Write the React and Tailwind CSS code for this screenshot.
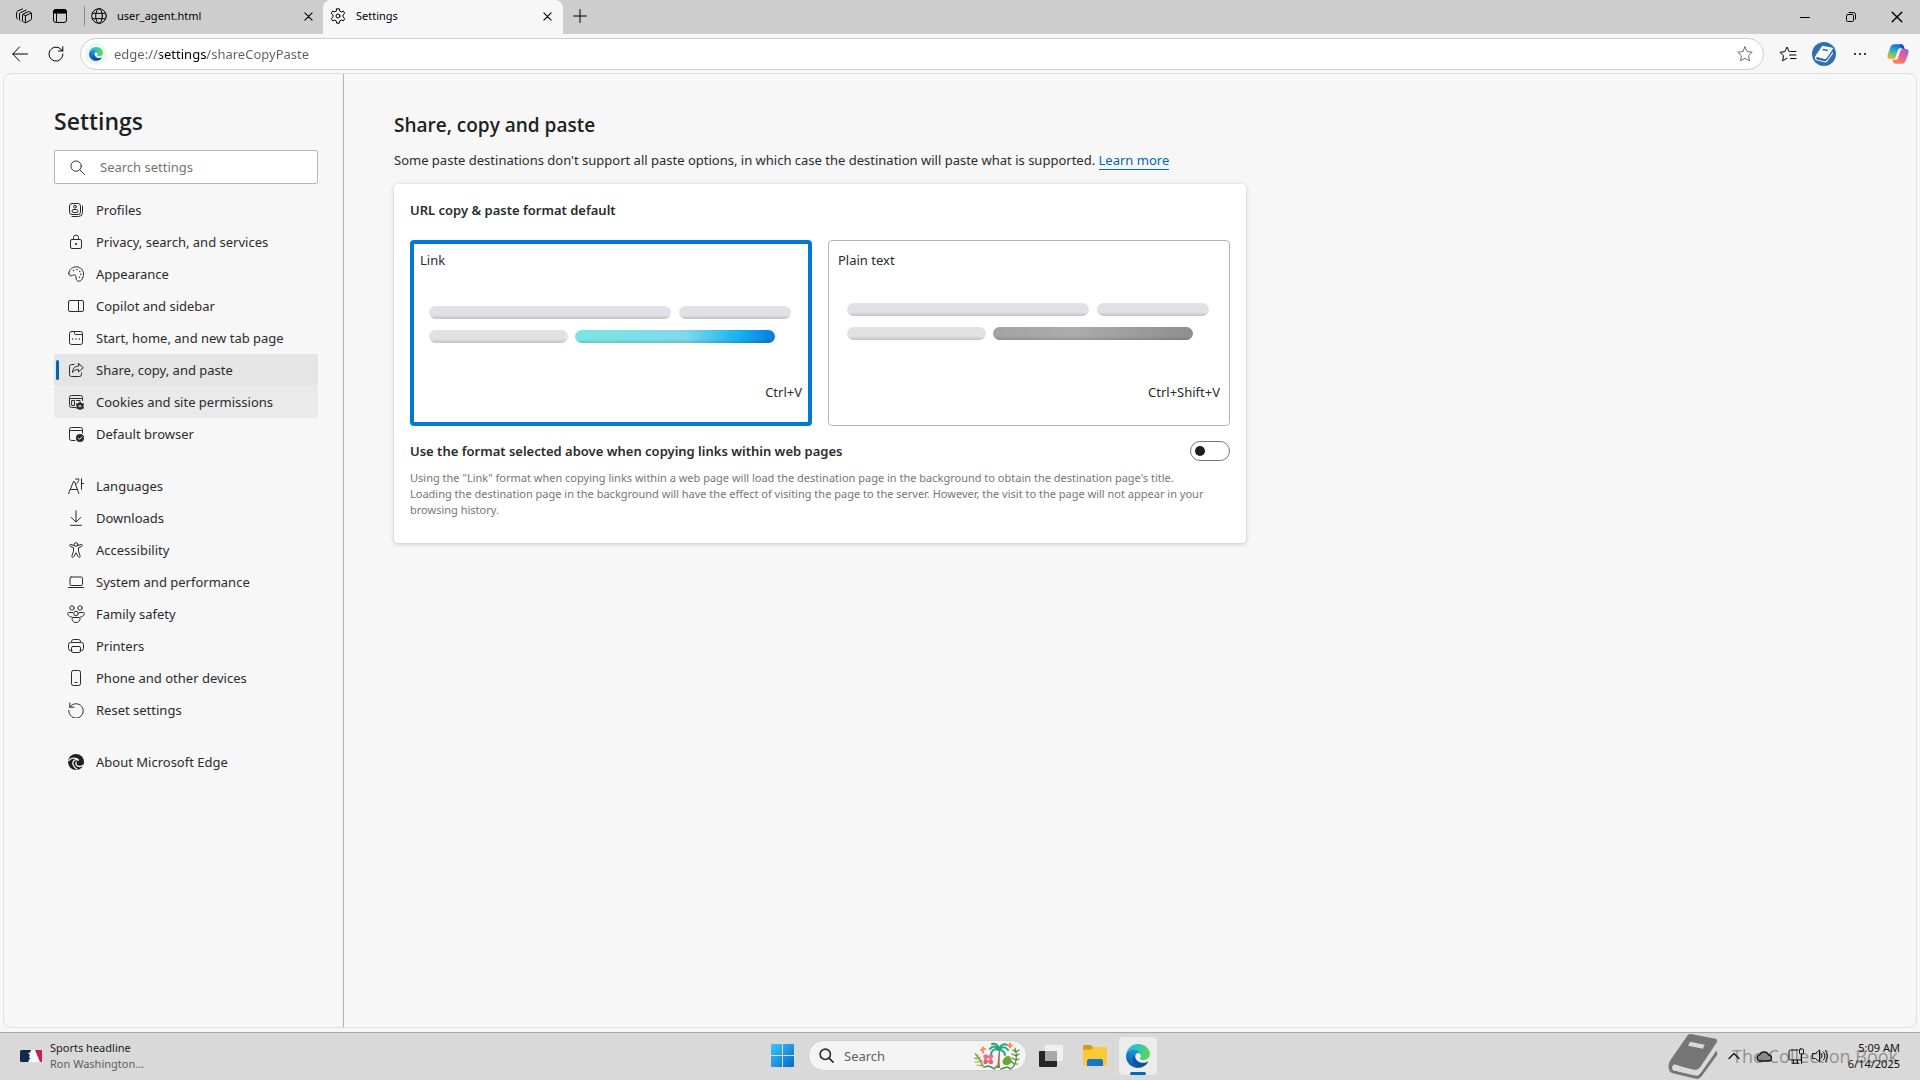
import React, { useId, useState } from "react";
import clsx from "clsx";

const Icon = ({ children, className = "size-4", box = 16, width = 1 }) => (
  <svg
    viewBox={`0 0 ${box} ${box}`}
    className={clsx("shrink-0", className)}
    fill="none"
    stroke="currentColor"
    strokeWidth={width}
    strokeLinecap="round"
    strokeLinejoin="round"
    aria-hidden="true"
  >
    {children}
  </svg>
);

const EDGE_BASE = "M231 190.5c-3.4 1.8-6.9 3.4-10.5 4.7a101.5 101.5 0 0 1-35.6 6.4c-47 0-87.8-32.3-87.8-73.7.1-11.4 6.4-21.8 16.4-27.2-42.5 1.8-53.4 46-53.4 72 0 73.3 67.6 80.8 82.1 80.8 7.8 0 19.6-2.3 26.7-4.6l1.3-.4a128.3 128.3 0 0 0 66.6-52.8 4 4 0 0 0-5.8-5.2z";
const EDGE_LEFT = "M105.7 241.4a79.2 79.2 0 0 1-22.7-21.3 80.7 80.7 0 0 1 29.5-119.4c3.2-1.5 8.5-4.1 15.6-4a32.4 32.4 0 0 1 25.7 13 31.9 31.9 0 0 1 6.3 18.7c0-.2 24.5-79.6-80-79.6-43.9 0-80 41.7-80 78.2a130.2 130.2 0 0 0 12.1 56 128 128 0 0 0 156.4 67 75.5 75.5 0 0 1-62.8-8z";
const EDGE_TOP = "M152.3 148.9c-.9 1-3.4 2.5-3.4 5.6 0 2.6 1.7 5.2 4.8 7.3 14.3 10 41.4 8.6 41.5 8.6 10.7 0 21.1-2.9 30.3-8.3a61.4 61.4 0 0 0 30.4-52.9c.3-22.4-8-37.3-11.3-43.9C223.5 23.9 177.7 0 128 0A128 128 0 0 0 0 126.2c.5-36.5 36.8-66 80-66 3.5 0 23.5.3 42 10.1 16.3 8.6 24.9 18.9 30.8 29.2 6.2 10.7 7.3 24.1 7.3 29.5s-2.7 13.3-7.8 19.9z";

const EdgeLogo = ({ className }) => {
  const id = useId();
  return (
    <svg viewBox="0 0 256 256" className={clsx("shrink-0", className)} aria-hidden="true">
      <defs>
        <linearGradient id={`${id}a`} x1="0" y1="1" x2="1" y2="1">
          <stop offset="0" stopColor="#0c59a4" />
          <stop offset="1" stopColor="#114a8b" />
        </linearGradient>
        <linearGradient id={`${id}b`} x1=".8" y1="0" x2=".3" y2="1">
          <stop offset="0" stopColor="#1b9de2" />
          <stop offset=".5" stopColor="#1580d2" />
          <stop offset="1" stopColor="#0b55a5" />
        </linearGradient>
        <linearGradient id={`${id}c`} x1="0" y1=".4" x2="1" y2=".6">
          <stop offset="0" stopColor="#30b8e4" />
          <stop offset=".5" stopColor="#36c7b0" />
          <stop offset="1" stopColor="#62d94b" />
        </linearGradient>
      </defs>
      <path d={EDGE_BASE} fill={`url(#${id}a)`} />
      <path d={EDGE_LEFT} fill={`url(#${id}b)`} />
      <path d={EDGE_TOP} fill={`url(#${id}c)`} />
    </svg>
  );
};

const icons = {
  profiles: (
    <Icon>
      <rect x="1.5" y="1.5" width="11" height="11" rx="2.5" />
      <circle cx="7" cy="4.7" r="1.4" />
      <rect x="4" y="7.5" width="6" height="3" rx="1.5" />
      <path d="M14.5 4v6.5a4 4 0 0 1-4 4H4" />
    </Icon>
  ),
  privacy: (
    <Icon>
      <rect x="2.5" y="5.5" width="11" height="9" rx="1.5" />
      <path d="M5.5 5.5V3.5a2.5 2.5 0 0 1 5 0v2" />
      <circle cx="8" cy="10" r=".6" fill="currentColor" />
    </Icon>
  ),
  appearance: (
    <Icon>
      <path d="M.8 7.2C1.2 3.2 4.6 .7 8.5 .8c4 .2 7 3.2 7 7.2 0 4-2 7.2-4.6 7.2-2 0-2.8-1.4-2.8-3.2 0-1.7-.2-3.2-1.8-3.2-1.5 0-2 1.2-3.4 1C1.2 9.6.7 8.5.8 7.2z" />
      <path d="M5.5 4.5h.01M9 3.6h.01M11.8 5.4h.01M12.8 8.3h.01M11.5 11.3h.01" strokeWidth="1.5" />
    </Icon>
  ),
  sidebar: (
    <Icon>
      <rect x=".5" y="2.5" width="15" height="11" rx="1.5" />
      <path d="M10.5 2.5v11" />
    </Icon>
  ),
  start: (
    <Icon>
      <rect x="1.5" y="1.5" width="13" height="13" rx="2" />
      <path d="M6.5 1.5v2a1 1 0 0 0 1 1h7" />
      <path d="M4.6 9h.01M8 9h.01M11.4 9h.01" strokeWidth="1.5" />
    </Icon>
  ),
  share: (
    <Icon>
      <path d="M6 2.5H3.5a2 2 0 0 0-2 2v8a2 2 0 0 0 2 2h8a2 2 0 0 0 2-2V11" />
      <path d="M10.5 1.5l4.8 4.2-4.8 4.2V7.5C7.5 7.5 5.7 8.5 4.5 10.5c.2-4 2.2-6.3 6-6.5z" />
    </Icon>
  ),
  cookies: (
    <Icon>
      <path d="M7.5 13.5h-4a2 2 0 0 1-2-2v-8a2 2 0 0 1 2-2h9a2 2 0 0 1 2 2v3M1.5 4.5h13" />
      <path d="M4 6.5h2.5v5H4zM8.5 6.5h3.5" />
      <circle cx="12" cy="12" r="2.6" strokeWidth="2" />
      <path d="M12 8v8M8.5 10l7 4M15.5 10l-7 4" strokeWidth="1.3" />
      <circle cx="12" cy="12" r=".9" fill="#eaeaea" stroke="none" />
    </Icon>
  ),
  browser: (
    <Icon>
      <path d="M7 14.5H3.5a2 2 0 0 1-2-2v-9a2 2 0 0 1 2-2h9a2 2 0 0 1 2 2V7M1.5 4.5h13" />
      <circle cx="12" cy="12" r="4" fill="currentColor" stroke="none" />
      <path d="M10.2 12.2l1.3 1.2 2.4-2.4" stroke="#f7f7f7" />
    </Icon>
  ),
  languages: (
    <Icon>
      <path d="M.6 15.5L5.5 3.5h1l4.3 12M2.5 11.5h6.7M7.5 1h3.3c0 2-.8 3.6-2.3 4.8M13.5.7v10.6M13.5 5.5h2" />
    </Icon>
  ),
  downloads: (
    <Icon>
      <path d="M8 .8v11M3.3 7.5L8 12l4.7-4.5M2.5 15.3h11" />
    </Icon>
  ),
  accessibility: (
    <Icon>
      <circle cx="8" cy="2.5" r="1.8" />
      <path d="M6 3.5l-3-1c-1.4-.4-2 1.4-.7 1.9l3.2 1.3v3.5l-1.6 4.6c-.5 1.5 1.3 2.1 1.9.8L8 10.8l2.2 3.8c.6 1.3 2.4.7 1.9-.8l-1.6-4.6V5.7l3.2-1.3c1.3-.5.7-2.3-.7-1.9l-3 1" />
    </Icon>
  ),
  system: (
    <Icon>
      <rect x="2" y="3" width="12.5" height="8.5" rx="1.2" />
      <path d="M.5 13.5h15" />
    </Icon>
  ),
  family: (
    <Icon className="-mx-px size-[18px]" box={18}>
      <circle cx="5" cy="3" r="2.2" />
      <circle cx="13" cy="3" r="2.2" />
      <circle cx="9" cy="8.5" r="2.3" />
      <path d="M5.5 7.5H1.6c-1.8 0-1 4.5 3 4.5M12.5 7.5h3.9c1.8 0 1 4.5-3 4.5M5.5 12.5h7c1 0 1 5-3.5 5s-4.5-5-3.5-5z" />
    </Icon>
  ),
  printers: (
    <Icon>
      <path d="M3.5 4.5v-1a2 2 0 0 1 2-2h5a2 2 0 0 1 2 2v1M4 12.5H2.5a2 2 0 0 1-2-2v-4a2 2 0 0 1 2-2h11a2 2 0 0 1 2 2v4a2 2 0 0 1-2 2H12" />
      <rect x="3.5" y="8.5" width="9" height="6" rx="1.3" />
    </Icon>
  ),
  phone: (
    <Icon>
      <rect x="3.5" y=".5" width="9" height="15" rx="1.8" />
      <path d="M7 12.5h2" />
    </Icon>
  ),
  reset: (
    <Icon>
      <path d="M1.8 1v4.2H6M1.8 5.2A7.2 7.2 0 1 1 .8 8.5" />
    </Icon>
  ),
  about: (
    <Icon>
      <circle cx="8" cy="8" r="8" fill="#1f1f1f" stroke="none" />
      <path d="M.8 6.5C3 3.8 8 3.2 10.5 6M10.2 6.2C6.5 4.5 3.5 8 5.5 11.5c.8 1.6 2 2.8 3.5 3.8M8.2 8.2c-1 2 .5 4.3 3.3 4.3 1.5 0 2.8-.5 3.7-1.2" stroke="#f7f7f7" strokeWidth="1.3" />
    </Icon>
  ),
};

const navGroups = [
  [
    { icon: "profiles", label: "Profiles" },
    { icon: "privacy", label: "Privacy, search, and services" },
    { icon: "appearance", label: "Appearance" },
    { icon: "sidebar", label: "Copilot and sidebar" },
    { icon: "start", label: "Start, home, and new tab page" },
    { icon: "share", label: "Share, copy, and paste", active: true },
    { icon: "cookies", label: "Cookies and site permissions", hovered: true },
    { icon: "browser", label: "Default browser" },
  ],
  [
    { icon: "languages", label: "Languages" },
    { icon: "downloads", label: "Downloads" },
    { icon: "accessibility", label: "Accessibility" },
    { icon: "system", label: "System and performance" },
    { icon: "family", label: "Family safety" },
    { icon: "printers", label: "Printers" },
    { icon: "phone", label: "Phone and other devices" },
    { icon: "reset", label: "Reset settings" },
  ],
  [{ icon: "about", label: "About Microsoft Edge" }],
];

const CloseGlyph = ({ className = "size-[9px]" }) => (
  <Icon box={10} className={className} width={1.2}>
    <path d="M1 1l8 8M9 1L1 9" />
  </Icon>
);

const TitleBar = () => (
  <header className="flex h-[34px] items-stretch bg-[#cdcdcd] pb-0.5 text-[11px] text-black">
    <div className="flex items-center pl-4">
      <button type="button" aria-label="Workspaces" className="w-9">
        <Icon>
          <path d="M6.5 7.2a1.5 1.5 0 0 1 .9-1.3L12 3.8c.5-.2.9-.2 1.4 0l1.3.6c.5.3.8.7.8 1.300v5c0 .6-.3 1.100-.9 1.400L10 14.600c-.5.2-.9.2-1.400 0l-1.300-.7a1.500 1.500 0 0 1-.8-1.300zM7 6.500l2.400 1.300 5.600-2.700M9.400 7.800v6.800" />
          <path d="M4.200 12.800a1.500 1.500 0 0 1-.7-1.300V6c0-.6.3-1.100.9-1.400L10 2.200M1.500 11a1.500 1.500 0 0 1-.9-1.300V4.500c0-.6.3-1.100.9-1.400L6.500.9" />
        </Icon>
      </button>
      <button type="button" aria-label="Tab actions" className="w-8">
        <Icon>
          <rect x="1.5" y="1.5" width="13" height="13" rx="2.5" />
          <path d="M1.5 3.5a2 2 0 0 1 2-2h9a2 2 0 0 1 2 2v1.6h-13z" fill="currentColor" />
          <path d="M4.5 5v9.5" />
        </Icon>
      </button>
      <span className="h-5 w-px bg-[#8a8a8a]" />
    </div>
    <div className="flex w-[238px] items-center pl-1.5 pr-1.5">
      <Icon>
        <circle cx="8" cy="8" r="7.3" />
        <ellipse cx="8" cy="8" rx="3.3" ry="7.3" />
        <path d="M1.4 5.3h13.2M1.4 10.7h13.2" />
      </Icon>
      <button type="button" className="flex-1 pl-2.5 text-left">user_agent.html</button>
      <button type="button" aria-label="Close user_agent.html" className="px-1">
        <CloseGlyph />
      </button>
    </div>
    <div className="-mb-0.5 flex w-[240px] items-center rounded-t-lg bg-[#f7f7f7] pb-0.5 pl-[7px] pr-[7px]">
      <Icon>
        <circle cx="8" cy="8" r="2" />
        <path d="M6.7.8h2.6l.5 2.3 1.4.8 2.2-.8 1.3 2.3-1.7 1.6v1.9l1.7 1.7-1.3 2.2-2.2-.7-1.4.8-.5 2.3H6.7l-.5-2.3-1.4-.8-2.2.7-1.3-2.2L3 8.900V7L1.300 5.400l1.300-2.300 2.200.8 1.400-.8z" />
      </Icon>
      <button type="button" className="flex-1 pl-2.5 text-left">Settings</button>
      <button type="button" aria-label="Close Settings" className="px-1">
        <CloseGlyph />
      </button>
    </div>
    <button type="button" aria-label="New tab" className="px-2.5">
      <Icon className="size-[14px]" box={14}>
        <path d="M7 .5v13M.5 7h13" />
      </Icon>
    </button>
    <div className="ml-auto flex pt-0.5">
      <button type="button" aria-label="Minimize" className="flex w-[46px] items-center justify-center">
        <Icon className="size-[10px]" box={10}><path d="M.5 5.5h9" /></Icon>
      </button>
      <button type="button" aria-label="Restore" className="flex w-[46px] items-center justify-center">
        <Icon className="size-[10px]" box={10}>
          <rect x=".5" y="2.5" width="7" height="7" rx="1.2" />
          <path d="M3 .6h4.5a2 2 0 0 1 2 2V7" />
        </Icon>
      </button>
      <button type="button" aria-label="Close window" className="flex w-[46px] items-center justify-center">
        <CloseGlyph className="size-3" />
      </button>
    </div>
  </header>
);

const CopilotLogo = () => (
  <svg viewBox="0 0 24 24" className="size-6" aria-hidden="true">
    <defs>
      <linearGradient id="cpL" x1=".6" y1="0" x2=".3" y2="1">
        <stop offset="0" stopColor="#1a66e0" />
        <stop offset=".45" stopColor="#22b0d8" />
        <stop offset=".7" stopColor="#7cc46a" />
        <stop offset="1" stopColor="#f4b61e" />
      </linearGradient>
      <linearGradient id="cpR" x1=".8" y1="0" x2=".3" y2="1">
        <stop offset="0" stopColor="#9b62ea" />
        <stop offset=".45" stopColor="#e75a9c" />
        <stop offset="1" stopColor="#ff8a4c" />
      </linearGradient>
    </defs>
    <path d="M14 2.2H8.2C6.2 2.2 5 3.6 4.3 5.6L1.6 13c-.8 2.6.3 4 2.7 4H7c1.5 0 2.2-.8 2.7-2.2l2.2-6.6c.5-1.4 1.2-2 2.6-2h3.2l-.7-2C16.5 2.8 15.6 2.2 14 2.2z" fill="url(#cpL)" />
    <path d="M10 21.8h5.8c2 0 3.2-1.4 3.9-3.4l2.7-7.4c.8-2.6-.3-4-2.7-4H17c-1.5 0-2.2.8-2.7 2.2l-2.2 6.6c-.5 1.4-1.2 2-2.6 2H6.3l.7 2c.5 1.4 1.4 2 3 2z" fill="url(#cpR)" />
    <path d="M14 2.2h1.6c1.2 0 1.9 1 2.3 2.2l.9 2.6h-1.3c-1.5 0-2.1-.5-2.5-1.9z" fill="#2448b8" />
  </svg>
);

const BookGlyph = ({ className, color, page }) => (
  <svg viewBox="0 0 50 47" className={className} aria-hidden="true">
    <path d="M23 1l25 5c2 .5 2 2 1 4L33 34c-2 3-4 4-7 3.5L6 33c-2 0-3 3-1.5 5L27 43.5c3 .5 4-.5 6-3L49 18l1 4-16 22c-2 2.5-4 3.5-7 2.5L4 41c-4-1.5-5-6-3-12L19 3c1-1.5 2-2.4 4-2z" fill={color} />
    <path d="M6 32c-2 1-3 4-1 6l22 5c3 .5 4-.5 6-3l14-19-13 14c-2 3-5 4-8 3.3z" fill={page} />
    <path d="M22 9l15 3-2 4-15-3z" fill={page} />
  </svg>
);

const Toolbar = () => (
  <div className="flex h-[39px] items-center bg-[#f7f7f7] pl-3 pr-2.5 text-black">
    <button type="button" aria-label="Back" className="w-9">
      <Icon><path d="M15.5 8H.8M7.5 1L.8 8l6.7 7" /></Icon>
    </button>
    <button type="button" aria-label="Refresh" className="w-8">
      <Icon>
        <path d="M15 8A7 7 0 1 1 12.8 3l1.9 2M14.8.7V5H10.5" />
      </Icon>
    </button>
    <div className="flex h-8 flex-1 items-center rounded-full border border-[#cfcfcf] bg-white pl-1 pr-2.5">
      <span className="flex size-[22px] items-center justify-center rounded-full bg-[#eef5f6]">
        <EdgeLogo className="size-[14px]" />
      </span>
      <input
        type="text"
        aria-label="Address"
        defaultValue="edge://settings/shareCopyPaste"
        className="ml-[7px] flex-1 bg-[linear-gradient(90deg,#5f5f5f_46px,#000_46px,#000_93px,#5f5f5f_93px)] bg-clip-text pt-0.5 text-[13px] text-transparent outline-none"
      />
      <button type="button" aria-label="Add to favorites" className="text-[#6b6b6b]">
        <Icon>
          <path d="M8 .9l2.2 4.6 5 .7-3.6 3.5.9 5L8 12.3l-4.5 2.4.9-5L.8 6.2l5-.7z" />
        </Icon>
      </button>
    </div>
    <div className="ml-[15px] flex items-center">
      <button type="button" aria-label="Favorites" className="mr-[15px]">
        <Icon className="size-[18px]" box={18}>
          <path d="M8 13.3L3.6 15.8l.9-5L1 7.3l4.9-.7L8 2l2.2 4.6M11.5 6.5h5.5M10.5 10h6.5M11.5 13.5h5.5" />
        </Icon>
      </button>
      <button type="button" aria-label="Profile" className="mr-4 flex size-6 items-center justify-center rounded-full bg-[#2f6fb0]">
        <BookGlyph className="size-[18px]" color="#fff" page="#2f6fb0" />
      </button>
      <button type="button" aria-label="Settings and more" className="mr-[18px]">
        <Icon>
          <path d="M3 8h.01M8 8h.01M13 8h.01" strokeWidth="2" />
        </Icon>
      </button>
      <button type="button" aria-label="Copilot"><CopilotLogo /></button>
    </div>
  </div>
);

const Sidebar = () => (
  <aside className="w-[340px] shrink-0 border-r border-[#b3b3b3] pl-[50px] pr-[25px]">
    <h1 className="pt-[31px] font-['Open_Sans',sans-serif] text-[23px] font-semibold leading-8 text-[#1f1f1f]">Settings</h1>
    <label className="mt-[13px] flex h-[34px] items-center rounded-xs border border-[#b5b5b5] bg-white pl-[15px]">
      <Icon className="size-[15px] text-[#2b2b2b]">
        <circle cx="6.5" cy="6.5" r="5.5" />
        <path d="M10.5 10.5l5 5" />
      </Icon>
      <input
        type="search"
        aria-label="Search settings"
        placeholder="Search settings"
        className="ml-[15px] min-w-0 flex-1 bg-transparent pt-0.5 text-[13px] outline-none placeholder:text-[#757575]"
      />
    </label>
    <nav className="mt-2.5 flex flex-col gap-5">
      {navGroups.map((group, i) => (
        <ul key={i}>
          {group.map((item) => (
            <li key={item.label}>
              <a
                href="#"
                className={clsx(
                  "flex h-8 items-center rounded-xs pl-0.5 text-[13px] text-[#2b2b2b]",
                  item.active && "bg-[#e5e5e5]",
                  item.hovered && "bg-[#eaeaea]"
                )}
              >
                <span className={clsx("mr-[9px] h-5 w-[3px] rounded-full", item.active && "bg-[#0067b8]")} />
                {icons[item.icon]}
                <span className="pl-3 pt-0.5">{item.label}</span>
              </a>
            </li>
          ))}
        </ul>
      ))}
    </nav>
  </aside>
);

// Skeleton text lines, the last bar stands for the pasted link
const PastePreview = ({ linked }) => (
  <svg viewBox="0 0 366 40" className="w-full" aria-hidden="true">
    <defs>
      <linearGradient id="barLink">
        <stop offset="0" stopColor="#7ce6e2" />
        <stop offset=".55" stopColor="#7fd9ea" />
        <stop offset=".82" stopColor="#14b4ee" />
        <stop offset="1" stopColor="#0a78e0" />
      </linearGradient>
      <linearGradient id="barPlain">
        <stop offset="0" stopColor="#a3a3a5" />
        <stop offset=".4" stopColor="#acacae" />
        <stop offset="1" stopColor="#8e8e8e" />
      </linearGradient>
      <linearGradient id="barShade" x1="0" y1="0" x2="0" y2="1">
        <stop offset=".7" stopColor="#000" stopOpacity="0" />
        <stop offset="1" stopColor="#000" stopOpacity=".14" />
      </linearGradient>
    </defs>
    <g fill="#e1e1e5">
      <rect x="1" y="1" width="242" height="13" rx="6.5" />
      <rect x="251" y="1" width="112" height="13" rx="6.5" />
      <rect x="1" y="25" width="139" height="13" rx="6.5" />
    </g>
    <rect x="147" y="25" width="200" height="13" rx="6.5" fill={linked ? "url(#barLink)" : "url(#barPlain)"} />
    <g fill="url(#barShade)">
      <rect x="1" y="1" width="242" height="13" rx="6.5" />
      <rect x="251" y="1" width="112" height="13" rx="6.5" />
      <rect x="1" y="25" width="139" height="13" rx="6.5" />
      <rect x="147" y="25" width="200" height="13" rx="6.5" />
    </g>
  </svg>
);

const FormatOption = ({ label, shortcut, value, format, onChange }) => {
  const checked = format === value;
  return (
    <label
      className={clsx(
        "flex h-[186px] flex-1 flex-col rounded-sm bg-white text-[13px] leading-5 text-[#2b2b2b]",
        checked ? "border-4 border-[#0078d4] p-1.5" : "border border-[#b5b5b5] p-[9px]"
      )}
    >
      <input
        type="radio"
        name="format"
        value={value}
        checked={checked}
        onChange={() => onChange(value)}
        className="sr-only"
      />
      <span>{label}</span>
      <span className={clsx("px-2", checked ? "pt-[35px]" : "pt-8")}>
        <PastePreview linked={value === "link"} />
      </span>
      <span className="mb-3.5 mt-auto text-right">{shortcut}</span>
    </label>
  );
};

const SharePage = () => {
  const [format, setFormat] = useState("link");

  return (
    <main className="min-w-0 flex-1 px-[50px] pt-[37px] text-[#2b2b2b]">
      <h2 className="font-['Open_Sans',sans-serif] text-[19px] font-semibold leading-7 text-[#1f1f1f]">Share, copy and paste</h2>
      <p className="mt-[11px] text-[13px] leading-5">
        Some paste destinations don't support all paste options, in which case the destination will paste what is supported.{" "}
        <a href="#" className="inline-block border-b border-[#0067b8] leading-[17px] text-[#0067b8]">Learn more</a>
      </p>
      <section className="mt-3.5 max-w-[852px] rounded-sm bg-white px-4 pb-[25px] pt-4 shadow-[0_1px_4px_rgba(0,0,0,0.22)]">
        <h3 className="text-[13px] font-semibold leading-5">URL copy &amp; paste format default</h3>
        <div className="mt-5 flex gap-4">
          <FormatOption label="Link" shortcut="Ctrl+V" value="link" format={format} onChange={setFormat} />
          <FormatOption label="Plain text" shortcut="Ctrl+Shift+V" value="plain" format={format} onChange={setFormat} />
        </div>
        <div className="mt-[15px] flex items-center justify-between">
          <label htmlFor="in-page" className="text-[13px] font-semibold leading-5">
            Use the format selected above when copying links within web pages
          </label>
          <input
            id="in-page"
            type="checkbox"
            role="switch"
            className="flex h-5 w-10 appearance-none items-center rounded-full border border-[#767676] bg-white px-1 before:size-2.5 before:rounded-full before:bg-[#1f1f1f] checked:justify-end"
          />
        </div>
        <p className="mt-[9px] text-[11px] leading-4 text-[#767676]">
          Using the "Link" format when copying links within a web page will load the destination page in the background to obtain the destination page's title.
          <br />
          Loading the destination page in the background will have the effect of visiting the page to the server. However, the visit to the page will not appear in your browsing history.
        </p>
      </section>
    </main>
  );
};

const SearchArt = () => (
  <svg viewBox="0 0 46 28" className="h-7 w-[46px]" fill="none" strokeLinecap="round" aria-hidden="true">
    <path d="M9 24C7 19 4 15 1.5 12" stroke="#7a9a2c" strokeWidth="1.5" />
    <path d="M3 17l1-4M5 20l1-5M7 23l1-5M3 17l-3-1M5 20l-4 0M8 24l-5-1" stroke="#8fae3a" strokeWidth="1.2" />
    <path d="M25 9c-1 6-1 11-2 17h3c-1-6 0-11 0-17z" fill="#a8653a" />
    <path d="M25 8C22 3 18 4 16 7M25 8c-5-2-8 1-8 5M25 8c0-5-4-7-7-6M25 8c1-5 5-7 8-5M25 8c4-4 7-3 9 0M25 8c4 0 6 3 6 5" stroke="#23a67a" strokeWidth="2" />
    <circle cx="14" cy="17" r="3.6" fill="#e8578c" />
    <circle cx="11.5" cy="14.5" r="2.2" fill="#f06a9a" />
    <circle cx="17" cy="14.5" r="2.2" fill="#f06a9a" />
    <circle cx="11.5" cy="20" r="2.2" fill="#e8578c" />
    <circle cx="17" cy="20" r="2.2" fill="#e8578c" />
    <circle cx="14.2" cy="17.2" r="1.7" fill="#ffd66b" />
    <path d="M7 8l4-1M9 5.5v5M34 3.5h4M36 1.5v4" stroke="#ff8a4c" strokeWidth="2" />
    <path d="M29 18c2-4 6-5 7-3 3 3 1 8-3 8s-5-2-4-5z" fill="#6aa62e" />
    <path d="M38 26c5-5 5-13 3-20M40 22l4 0M42 18l3-1M42 14l3-2M42 10l3-2M40 22l-3-3M42 18l-4-2M42 14l-4-2M42 10l-3-2" stroke="#4f8f3a" strokeWidth="1.2" />
    <path d="M10 25l5-1 4 2M20 27l3-3M27 27l6-2 4 2" stroke="#3d9a4a" strokeWidth="1.6" />
  </svg>
);

const Taskbar = () => (
  <footer className="relative grid h-12 grid-cols-[1fr_auto_1fr] items-center border-t border-[#a5a5a5] bg-[#d9d9d9] pb-0.5">
    <button type="button" className="flex items-center gap-2 pl-5 text-left text-[11px] leading-4">
      <svg viewBox="0 0 22 12" className="h-3 w-[22px]" aria-hidden="true">
        <rect width="22" height="12" rx="1.5" fill="#14284b" />
        <path d="M14 0h6.5A1.5 1.5 0 0 1 22 1.5v9a1.5 1.5 0 0 1-1.5 1.5H17z" fill="#c8204a" />
        <path d="M13.500 0h1.500l5 12H8.500c0-1.500.5-2.500 2-3.200C9 8 8.800 6 10 5L8 3l1-.5 2.800 2A2.200 2.200 0 0 1 13.500 0z" fill="#fff" />
      </svg>
      <span>
        <span className="block text-[#1a1a1a]">Sports headline</span>
        <span className="block text-[#5c5c5c]">Ron Washington...</span>
      </span>
    </button>
    <div className="flex items-center pl-2">
      <button type="button" aria-label="Start">
        <svg viewBox="0 0 23 23" className="size-[23px]" aria-hidden="true">
          <defs>
            <linearGradient id="win" x1="0" y1="0" x2="23" y2="23" gradientUnits="userSpaceOnUse">
              <stop offset="0" stopColor="#3ec6f8" />
              <stop offset="1" stopColor="#0369c9" />
            </linearGradient>
          </defs>
          <path d="M1 0h10v11H0V1a1 1 0 0 1 1-1zM12 0h10a1 1 0 0 1 1 1v10H12zM0 12h11v11H1a1 1 0 0 1-1-1zM12 12h11v10a1 1 0 0 1-1 1H12z" fill="url(#win)" />
        </svg>
      </button>
      <label className="ml-3.5 flex h-[31px] w-[219px] items-center rounded-full border border-[#cfcfcf] bg-[#f4f4f4] pl-2.5 pr-1.5">
        <Icon className="size-[15px] text-[#2b2b2b]" width={1.7}>
          <circle cx="6.7" cy="6.7" r="5.5" />
          <path d="M11 11l4 4" />
        </Icon>
        <input
          type="search"
          aria-label="Search"
          placeholder="Search"
          className="ml-2.5 min-w-0 flex-1 bg-transparent pt-0.5 text-[13px] outline-none placeholder:text-[#5f5f5f]"
        />
        <SearchArt />
      </label>
      <button type="button" aria-label="Task view" className="ml-3">
        <svg viewBox="0 0 24 24" className="size-6" aria-hidden="true">
          <rect x="6" y="1" width="18" height="16" rx="1" fill="#f1f1f1" />
          <rect x="0" y="7" width="18" height="16" rx="1" fill="#262626" />
          <rect x="6" y="7" width="12" height="10" fill="#a9a9a9" />
        </svg>
      </button>
      <button type="button" aria-label="File Explorer" className="ml-5">
        <svg viewBox="0 0 24 24" className="size-6" aria-hidden="true">
          <path d="M0 3a2 2 0 0 1 2-2h6l2.5 3H22a2 2 0 0 1 2 2v3H0z" fill="#d39a12" />
          <path d="M0 7.5C0 6 1 5.5 2 5.5h6L11 3h11a2 2 0 0 1 2 2v15a2 2 0 0 1-2 2H2a2 2 0 0 1-2-2z" fill="#fbc836" />
          <path d="M4 22v-5a2 2 0 0 1 2-2h12a2 2 0 0 1 2 2v5z" fill="#1677c9" />
        </svg>
      </button>
      <button type="button" aria-label="Microsoft Edge" className="ml-3 flex h-[38px] w-[38px] flex-col items-center rounded-sm bg-[#ececec] pt-[7px]">
        <EdgeLogo className="size-6" />
        <span className="mt-1 h-[3px] w-4 rounded-full bg-[#0067c0]" />
      </button>
    </div>
    {/* Channel watermark, lies under the tray icons */}
    <div className="pointer-events-none absolute right-[22px] top-0 flex items-center text-[#929292]">
      <BookGlyph className="mr-3.5 h-[46px] w-[50px]" color="#757575" page="#d9d9d9" />
      <span className="font-['Open_Sans',sans-serif] text-[18px] leading-[44px]">The Collection Book</span>
    </div>
    <div className="relative flex items-center justify-end pr-5 text-[#111]">
      <button type="button" aria-label="Show hidden icons" className="mr-4">
        <Icon className="size-3" box={12} width={1.3}><path d="M1 8.5l5-5 5 5" /></Icon>
      </button>
      <button type="button" aria-label="OneDrive" className="mr-4">
        <Icon className="size-4" width={1.3}>
          <path d="M4 13a3.2 3.2 0 0 1-.2-6.3A4.7 4.7 0 0 1 12.6 7 3 3 0 0 1 12.5 13z" fill="#8a8a8a" />
        </Icon>
      </button>
      <button type="button" aria-label="Network" className="mr-2">
        <Icon className="size-4">
          <path d="M10 2H2.5A1.5 1.5 0 0 0 1 3.5v7A1.5 1.5 0 0 0 2.5 12h11M5.5 12v3M9.5 12v3M4 15.3h7" />
          <rect x="11.5" y="1" width="4" height="5" rx=".8" />
          <path d="M13.5 6v9.5" />
        </Icon>
      </button>
      <button type="button" aria-label="Volume" className="mr-2">
        <Icon className="size-4">
          <path d="M1 5.5h2.5L7.5 2v12l-4-3.5H1zM9.5 6a3 3 0 0 1 0 4M11.5 4a6 6 0 0 1 0 8M13.5 2.5a8.5 8.5 0 0 1 0 11" />
        </Icon>
      </button>
      <button type="button" className="w-16 text-right text-[11px] leading-4">
        <span className="block">5:09 AM</span>
        <span className="block">6/14/2025</span>
      </button>
    </div>
  </footer>
);

const App = () => (
  <div className="flex min-h-screen flex-col bg-[#f7f7f7] font-['Noto_Sans','Open_Sans',sans-serif]">
    <TitleBar />
    <Toolbar />
    <div className="mx-[3px] mb-1 flex flex-1 rounded-lg border border-[#dedede]">
      <Sidebar />
      <SharePage />
    </div>
    <Taskbar />
  </div>
);

export default App;
